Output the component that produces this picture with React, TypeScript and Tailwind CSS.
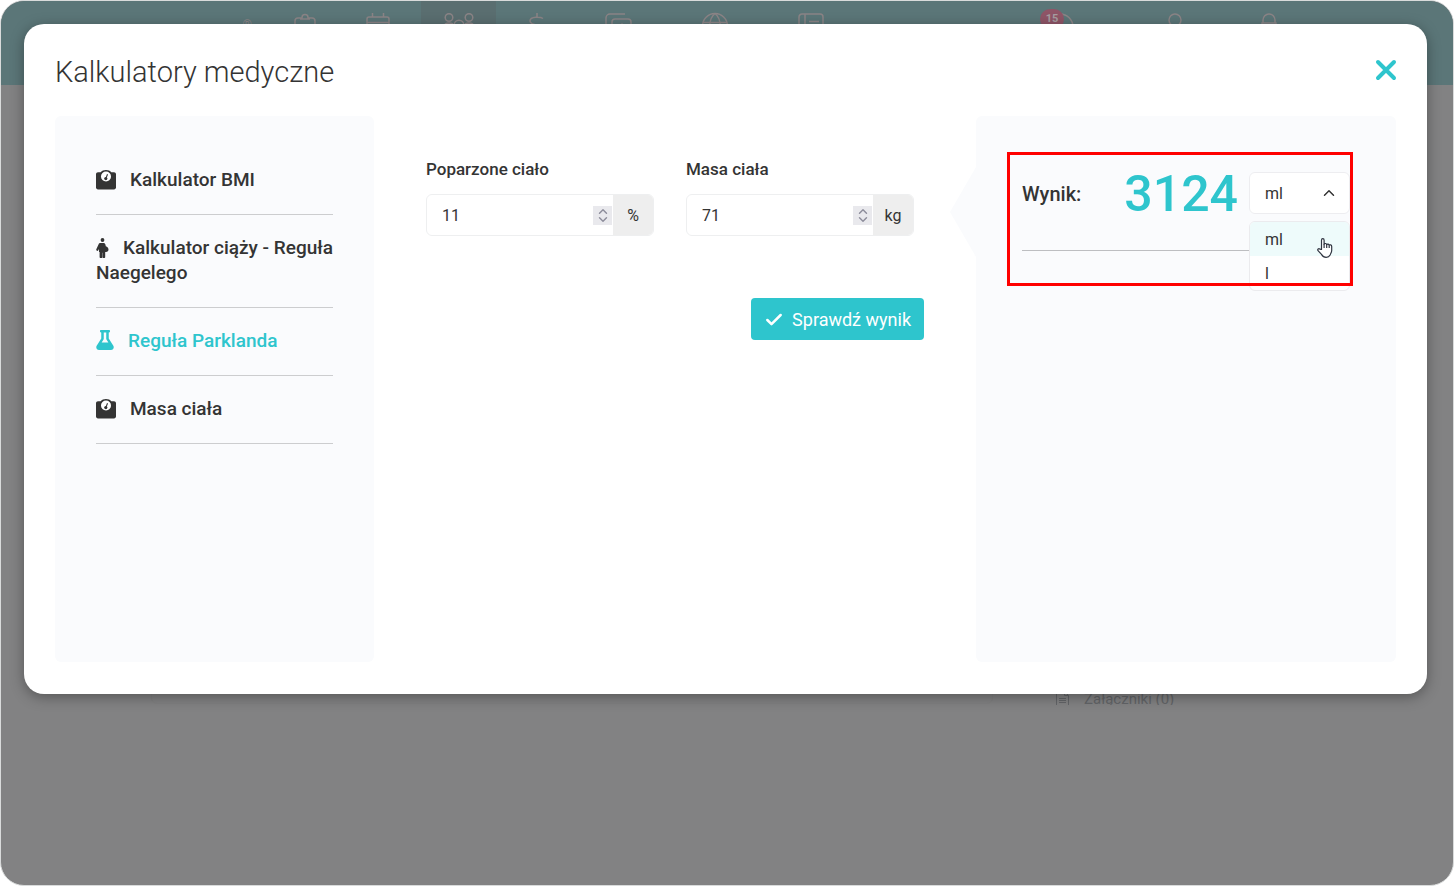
import { useState } from 'react';
import type { ReactNode } from 'react';
import { FaFlask } from 'react-icons/fa';
import { Check, ChevronDown, ChevronUp } from 'lucide-react';
import { clsx } from 'clsx';

const topNav = [
  {
    name: 'Gabinet',
    width: 'w-[70px]',
    icon: <path d="M9 5H5a3 3 0 0 0-3 3v13h20V8a3 3 0 0 0-3-3h-4M7 6h10M9 6V4.500a3 3 0 0 1 6 0V6M12 12v8M8 16h8" />,
  },
  {
    name: 'Kalendarz',
    width: 'w-[76px]',
    icon: <path d="M3 4h18a2 2 0 0 1 2 2v16H1V6a2 2 0 0 1 2-2zM1 9.500h22M6.500 0v4M17.500 0v4" />,
  },
  {
    name: 'Pacjenci',
    width: 'w-[75px] ml-[5px]',
    active: true,
    icon: (
      <>
        <circle cx="2" cy="4.500" r="3.800" />
        <circle cx="22" cy="4.500" r="3.800" />
        <circle cx="12" cy="12" r="4.800" />
        <path d="M-2 12c0-2 2-2 4-2s3 .5 4 1M26 12c0-2-2-2-4-2s-3 .5-4 1" />
      </>
    ),
  },
  {
    name: 'Finanse',
    width: 'w-[82px]',
    icon: <path d="M12 0v5M12 21v4M18 5.500c-2-1.500-13-2.500-13 2.500s14 4 14 8.500-11 5-14 2" />,
  },
  {
    name: 'Dokumenty',
    width: 'w-[80px]',
    icon: <path d="M19 1H4a4 4 0 0 0-4 4v14M9 6h13a3 3 0 0 1 3 3v12H6V9a3 3 0 0 1 3-3zM13 14l3-3 3 3" />,
  },
  {
    name: 'Portal',
    width: 'w-[114px]',
    icon: (
      <>
        <circle cx="12" cy="13" r="12.500" />
        <path d="M12 .5C5 6 5 20 12 25.500M12 .5c7 5.500 7 19.500 0 25M0 9.500h24" />
      </>
    ),
  },
  {
    name: 'Raporty',
    width: 'w-[78px]',
    icon: <path d="M3 1h18a3 3 0 0 1 3 3v18H0V4a3 3 0 0 1 3-3zM6 1v21M10 8.500h10M10 13h10" />,
  },
];

const userNav = [
  {
    name: 'Powiadomienia',
    width: 'w-[134px]',
    badge: 15,
    icon: <path d="M-1 24V14a13 13 0 0 1 26 0v10z" />,
  },
  {
    name: 'Profil',
    width: 'w-[95px]',
    icon: (
      <>
        <circle cx="12" cy="7" r="6" />
        <path d="M1 24c0-6 5-9 11-9s11 3 11 9" />
      </>
    ),
  },
  {
    name: 'Wyloguj',
    width: 'w-[94px]',
    icon: <path d="M5 10h14v12H5zM6 10V7a6 6 0 0 1 12 0v3" />,
  },
];

function ScaleIcon() {
  return (
    <svg viewBox="0 0 20 20" className="inline-block size-5 align-[-4px]" aria-hidden="true">
      <path
        fill="currentColor"
        d="M2 2.200h2.700C5.800.8 7.800 0 10 0s4.200.8 5.300 2.200H18c1.100 0 2 .8 2 1.900v13.500c0 1.100-.9 1.900-2 1.900H2c-1.100 0-2-.8-2-1.900V4.100c0-1.100.9-1.900 2-1.900z"
      />
      <circle cx="10" cy="6.500" r="5" fill="#fff" />
      <circle cx="9.800" cy="8.600" r="1.600" fill="currentColor" />
      <path d="M9.800 8.600l1.700-4.300" stroke="currentColor" strokeWidth="1.100" />
    </svg>
  );
}

function PregnantIcon() {
  return (
    <svg viewBox="0 0 13 20" className="inline-block h-5 w-[13px] align-[-4px]" fill="currentColor" aria-hidden="true">
      <circle cx="6.500" cy="2" r="1.900" />
      <path d="M4.500 5h3c1 0 1.700.7 1.900 1.600l.4 1.700c1.600.5 2.700 1.700 2.700 3.200 0 1.400-.9 2.300-2.500 2.600h-.8V19c0 .6-.4 1-1 1H7.100c-.3 0-.5-.2-.5-.5v-4.700h-.3v4.700c0 .3-.2.500-.5.500H4.600c-.6 0-1-.4-1-1v-5H3v-3l-.7 1.300c-.3.6-.9.700-1.400.5-.6-.3-.8-.9-.6-1.500l2.200-4.900C2.900 5.500 3.600 5 4.500 5z" />
    </svg>
  );
}

const calculators = [
  { id: 'bmi', name: 'Kalkulator BMI', icon: <ScaleIcon /> },
  { id: 'naegele', name: 'Kalkulator ciąży - Reguła Naegelego', icon: <PregnantIcon /> },
  { id: 'parkland', name: 'Reguła Parklanda', icon: <FaFlask className="inline-block h-5 w-[18px] align-[-3px]" /> },
  { id: 'mass', name: 'Masa ciała', icon: <ScaleIcon /> },
];

type TopItemProps = { name: string; width: string; icon: ReactNode; active?: boolean; badge?: number };

function TopItem({ name, width, icon, active, badge }: TopItemProps) {
  return (
    <a
      href="#"
      aria-label={name}
      className={clsx('flex h-full shrink-0 justify-center pt-3 text-[#8b8486]', width, active && 'bg-[#5a6e70]')}
    >
      <span className="relative size-6">
        <svg viewBox="0 0 24 24" className="size-6 overflow-visible" fill="none" stroke="currentColor" strokeWidth="1.500">
          {icon}
        </svg>
        {badge && (
          <span className="absolute -top-1 -left-2 h-5 w-6 rounded-full bg-[#8f5567] text-center text-[11px] leading-5 font-bold text-[#a69ea1]">
            {badge}
          </span>
        )}
      </span>
    </a>
  );
}

type FieldProps = { id: string; label: string; unit: string; value: number; onChange: (value: number) => void };

function NumberField({ id, label, unit, value, onChange }: FieldProps) {
  return (
    <div className="min-w-0 flex-1">
      <label htmlFor={id} className="block text-[17px] leading-6 font-medium">
        {label}
      </label>
      <div className="mt-[13px] flex h-[42px] overflow-hidden rounded-md border border-[#eeeff0] bg-white">
        <input
          id={id}
          type="number"
          value={value}
          onChange={(e) => onChange(Number(e.target.value))}
          className="min-w-0 flex-1 pt-0.5 pl-[15px] text-base outline-none [appearance:textfield] [&::-webkit-inner-spin-button]:appearance-none"
        />
        <div className="flex h-full items-center pr-px">
          <div className="flex h-[19px] w-[19px] flex-col items-center justify-between bg-[#e9e9ed] py-0.5 text-[#8f8f9d]">
            <button type="button" aria-label={`${label} +`} onClick={() => onChange(value + 1)}>
              <ChevronUp className="block h-[7px] w-2.5" viewBox="4 6 16 12" strokeWidth={2.5} />
            </button>
            <button type="button" aria-label={`${label} -`} onClick={() => onChange(value - 1)}>
              <ChevronDown className="block h-[7px] w-2.5" viewBox="4 6 16 12" strokeWidth={2.5} />
            </button>
          </div>
        </div>
        <span className="flex w-10 items-center justify-center bg-[#eeeeee] pt-0.5 text-base">{unit}</span>
      </div>
    </div>
  );
}

function HandCursor() {
  return (
    <svg
      viewBox="0 0 16 20"
      className="pointer-events-none absolute top-4 right-4 h-5 w-4"
      fill="#fff"
      stroke="#2f3440"
      strokeWidth="1.200"
      strokeLinejoin="round"
      aria-hidden="true"
    >
      <path d="M4.500 11.500V2.200c0-2 2.600-2 2.600 0v4c.3-1 2.500-1 2.600.4.500-.9 2.400-.7 2.500.6.600-.7 2.500-.5 2.500 1.200v4.200c0 2-1.200 3-1.600 4.400-.8 1.600-2 2.300-4 2.300-2.500 0-3.500-1-4.600-2.900L1 12.700c-.8-1.400.7-2.500 1.800-1.600z" />
      <path d="M7.100 6v4M9.700 6.600V10M12.200 7.200V10" fill="none" />
    </svg>
  );
}

export default function App() {
  const [active, setActive] = useState('parkland');
  const [burned, setBurned] = useState(11);
  const [mass, setMass] = useState(71);
  const [unit, setUnit] = useState('ml');

  // Parkland formula: 4 ml x kg x % of burned area
  const result = unit === 'ml' ? 4 * burned * mass : (4 * burned * mass) / 1000;

  return (
    <div className="min-h-screen bg-white font-[Roboto,sans-serif] text-[#343434]">
      <div className="relative min-h-screen overflow-hidden rounded-3xl border border-[#d9dbdb] bg-[#828283]">
        <header className="flex h-[84px] items-stretch bg-[#5b7678]">
          <div className="w-[269px] shrink-0 pt-4 pr-[18px] text-right text-xs leading-4 text-[#8b8486]">®</div>
          <nav className="flex">
            {topNav.map((item) => (
              <TopItem key={item.name} {...item} />
            ))}
          </nav>
          <div className="mr-[137px] ml-auto flex">
            {userNav.map((item) => (
              <TopItem key={item.name} {...item} />
            ))}
          </div>
        </header>
        <main className="mt-[600px] flex h-5 overflow-hidden text-[#636568]">
          <div className="ml-[150px] h-[19px] w-[58%] rounded-b-md border border-[#7f7f80]" />
          <div className="ml-auto flex w-[397px] gap-[15px]">
            <svg viewBox="0 0 13 18" className="mt-1.5 h-[18px] w-[13px]" fill="none" stroke="currentColor" aria-hidden="true">
              <path d="M.5 17.500V.5h8l4 4v13zM8.500.5v4h4M3 7.500h7M3 9.500h7M3 11.500h7" />
            </svg>
            <span className="pt-1 text-[15px] leading-5">Załączniki (0)</span>
          </div>
        </main>

        <section
          role="dialog"
          aria-labelledby="dialog-title"
          className="absolute top-[23px] right-[26px] left-[23px] rounded-[20px] bg-white px-[31px] py-8 shadow-[0_3px_14px_rgba(0,0,0,0.35)]"
        >
          <div className="flex h-8 items-start justify-between">
            <h1 id="dialog-title" className="text-[29px] leading-8 font-light">
              Kalkulatory medyczne
            </h1>
            <button type="button" aria-label="Zamknij" className="pt-1 text-[#2ec5cd]">
              <svg viewBox="0 0 20 20" className="size-5 overflow-visible" stroke="currentColor" strokeWidth="4" strokeLinecap="round">
                <path d="M2 2l16 16M18 2L2 18" />
              </svg>
            </button>
          </div>

          <div className="mt-7 grid min-h-[546px] grid-cols-[minmax(0,319fr)_minmax(0,602fr)_minmax(0,420fr)]">
            <nav className="rounded-md bg-[#fafbfd] px-[41px] pt-[31px]">
              {calculators.map((calc) => (
                <button
                  key={calc.id}
                  type="button"
                  onClick={() => setActive(calc.id)}
                  className={clsx(
                    'block w-full border-b border-[#cccdcf] pt-5 pb-[22px] text-left text-[19px] leading-[25px] font-medium',
                    active === calc.id && 'text-[#2ec5cd]',
                  )}
                >
                  <span className="mr-3.5">{calc.icon}</span>
                  {calc.name}
                </button>
              ))}
            </nav>

            <form className="px-[52px] pt-[41px]" onSubmit={(e) => e.preventDefault()}>
              <div className="mr-2.5 flex gap-8">
                <NumberField id="burned" label="Poparzone ciało" unit="%" value={burned} onChange={setBurned} />
                <NumberField id="mass" label="Masa ciała" unit="kg" value={mass} onChange={setMass} />
              </div>
              <div className="mt-[62px] flex justify-end">
                <button
                  type="submit"
                  className="flex h-[42px] items-center gap-2 rounded bg-[#2ec5cd] px-[13px] pt-0.5 text-lg text-white"
                >
                  <Check className="size-5" strokeWidth={3} />
                  Sprawdź wynik
                </button>
              </div>
            </form>

            <aside className="relative rounded-md bg-[#fafbfd] px-[46px] pt-9">
              <svg viewBox="0 0 26 90" className="absolute top-[51px] -left-[26px] h-[90px] w-[26px]" fill="#fafbfd" aria-hidden="true">
                <path d="M26 0v90L0 45z" />
              </svg>
              <div className="relative">
                <div className="flex h-[99px] items-start border-b border-[#bdbec1] pt-5">
                  <span className="text-xl leading-11 font-medium">Wynik:</span>
                  <output className="mr-[11px] ml-auto text-[50px] leading-11 font-medium text-[#2ec5cd]">{result}</output>
                  <div className="relative w-[101px]">
                    <select
                      aria-label="Jednostka"
                      value={unit}
                      onChange={(e) => setUnit(e.target.value)}
                      className="h-[42px] w-full appearance-none rounded-md border border-[#ededf0] bg-white pt-0.5 pl-[15px] text-base outline-none"
                    >
                      <option value="ml">ml</option>
                      <option value="l">l</option>
                    </select>
                    <ChevronUp className="pointer-events-none absolute top-3 right-3 size-[18px]" strokeWidth={2} />
                    <ul
                      role="listbox"
                      aria-label="Jednostka"
                      className="absolute inset-x-0 top-[49px] overflow-hidden rounded-md border border-[#ebebee] bg-white text-base leading-9"
                    >
                      {['ml', 'l'].map((option) => (
                        <li
                          key={option}
                          role="option"
                          aria-selected={unit === option}
                          onClick={() => setUnit(option)}
                          className={clsx('h-[34px] px-[15px]', unit === option && 'bg-[#eefbfb]')}
                        >
                          {option}
                        </li>
                      ))}
                      <HandCursor />
                    </ul>
                  </div>
                </div>
                <div className="pointer-events-none absolute top-0 -right-[3px] -left-[15px] h-[134px] border-3 border-[#ff0000]" />
              </div>
            </aside>
          </div>
        </section>
      </div>
    </div>
  );
}
